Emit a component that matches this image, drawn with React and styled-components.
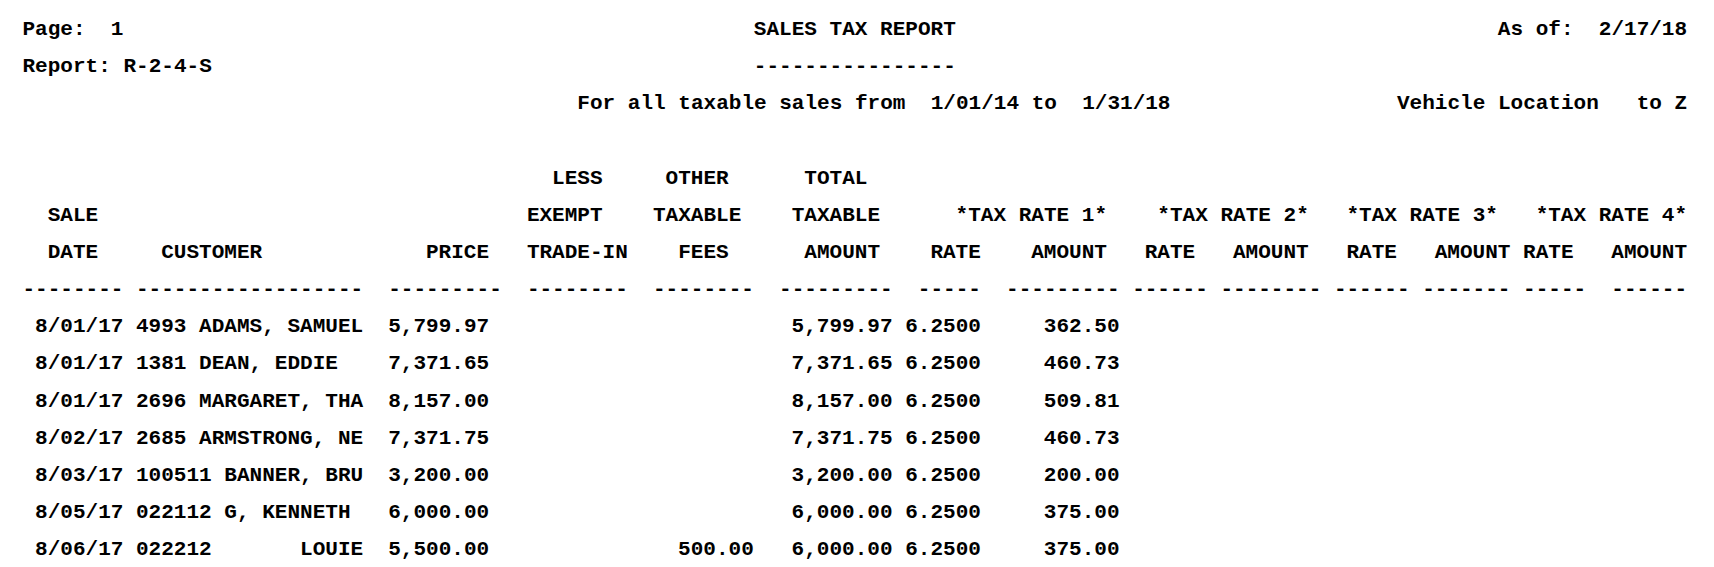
import React from "react";
import styled, { createGlobalStyle } from "styled-components";

const COLS = 132;

const titleLines = [
  [
    { col: 0, text: "Page:  1" },
    { col: 58, text: "SALES TAX REPORT" },
    { col: 117, text: "As of:  2/17/18" },
  ],
  [
    { col: 0, text: "Report: R-2-4-S" },
    { col: 58, text: "----------------" },
  ],
  [
    { col: 44, text: "For all taxable sales from  1/01/14 to  1/31/18" },
    { col: 109, text: "Vehicle Location   to Z" },
  ],
  [],
];

const headLines = [
  [
    { col: 42, text: "LESS" },
    { col: 51, text: "OTHER" },
    { col: 62, text: "TOTAL" },
  ],
  [
    { col: 2, text: "SALE" },
    { col: 40, text: "EXEMPT" },
    { col: 50, text: "TAXABLE" },
    { col: 61, text: "TAXABLE" },
    { col: 74, text: "*TAX RATE 1*" },
    { col: 90, text: "*TAX RATE 2*" },
    { col: 105, text: "*TAX RATE 3*" },
    { col: 120, text: "*TAX RATE 4*" },
  ],
  [
    { col: 2, text: "DATE" },
    { col: 11, text: "CUSTOMER" },
    { col: 32, text: "PRICE" },
    { col: 40, text: "TRADE-IN" },
    { col: 52, text: "FEES" },
    { col: 62, text: "AMOUNT" },
    { col: 72, text: "RATE" },
    { col: 80, text: "AMOUNT" },
    { col: 89, text: "RATE" },
    { col: 96, text: "AMOUNT" },
    { col: 105, text: "RATE" },
    { col: 112, text: "AMOUNT" },
    { col: 119, text: "RATE" },
    { col: 126, text: "AMOUNT" },
  ],
];

// underline runs: [start column, length]
const rules = [
  [0, 8], [9, 18], [29, 9], [40, 8], [50, 8], [60, 9], [71, 5],
  [78, 9], [88, 6], [95, 8], [104, 6], [111, 7], [119, 5], [126, 6],
];

// data fields: start column, width, right aligned
const fields = [
  { key: "date", col: 1, span: 7 },
  { key: "customer", col: 9, span: 18 },
  { key: "price", col: 29, span: 8, right: true },
  { key: "exempt", col: 40, span: 8, right: true },
  { key: "fees", col: 50, span: 8, right: true },
  { key: "total", col: 60, span: 9, right: true },
  { key: "rate", col: 70, span: 6, right: true },
  { key: "amount", col: 78, span: 9, right: true },
];

const sales = [
  { date: "8/01/17", customer: "4993 ADAMS, SAMUEL", price: "5,799.97", total: "5,799.97", rate: "6.2500", amount: "362.50" },
  { date: "8/01/17", customer: "1381 DEAN, EDDIE", price: "7,371.65", total: "7,371.65", rate: "6.2500", amount: "460.73" },
  { date: "8/01/17", customer: "2696 MARGARET, THA", price: "8,157.00", total: "8,157.00", rate: "6.2500", amount: "509.81" },
  { date: "8/02/17", customer: "2685 ARMSTRONG, NE", price: "7,371.75", total: "7,371.75", rate: "6.2500", amount: "460.73" },
  { date: "8/03/17", customer: "100511 BANNER, BRU", price: "3,200.00", total: "3,200.00", rate: "6.2500", amount: "200.00" },
  { date: "8/05/17", customer: "022112 G, KENNETH", price: "6,000.00", total: "6,000.00", rate: "6.2500", amount: "375.00" },
  { date: "8/06/17", customer: "022212       LOUIE", price: "5,500.00", fees: "500.00", total: "6,000.00", rate: "6.2500", amount: "375.00" },
];

function TextLine({ items }) {
  return (
    <Row>
      {items.map((it, i) => (
        <Field key={i} $col={it.col} $span={it.text.length}>
          {it.text}
        </Field>
      ))}
    </Row>
  );
}

function App() {
  return (
    <>
      <GlobalStyle />
      <Sheet>
        {titleLines.map((items, i) => (
          <TextLine key={`t${i}`} items={items} />
        ))}
        {headLines.map((items, i) => (
          <TextLine key={`h${i}`} items={items} />
        ))}
        <Row>
          {rules.map(([col, len], i) => (
            <Field key={i} $col={col} $span={len}>
              {"-".repeat(len)}
            </Field>
          ))}
        </Row>
        {sales.map((sale, i) => (
          <Row key={i}>
            {fields.map((f) =>
              sale[f.key] ? (
                <Field key={f.key} $col={f.col} $span={f.span} $right={f.right}>
                  {sale[f.key]}
                </Field>
              ) : null
            )}
          </Row>
        ))}
      </Sheet>
    </>
  );
}

export default App;

const GlobalStyle = createGlobalStyle`
  html, body {
    margin: 0;
    background: #ffffff;
  }
`;

const Sheet = styled.main`
  padding: 11px 0 0 22.5px;
  font-family: "Liberation Mono", "Courier New", monospace;
  font-size: 21.04px;
  font-weight: bold;
  color: #000000;
`;

const Row = styled.div`
  display: grid;
  grid-template-columns: repeat(${COLS}, 1ch);
  height: 37.17px;
  line-height: 37.17px;
  white-space: pre;
`;

const Field = styled.span`
  grid-column: ${(p) => p.$col + 1} / span ${(p) => p.$span};
  grid-row: 1;
  text-align: ${(p) => (p.$right ? "right" : "left")};
`;
